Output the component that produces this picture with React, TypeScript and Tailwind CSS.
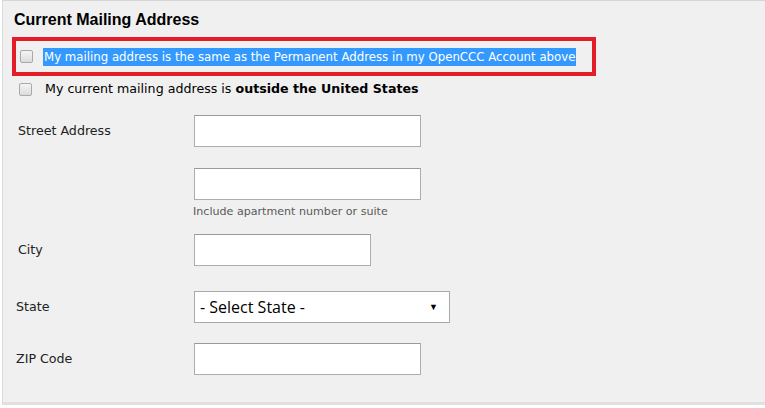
import React from 'react'

const LABEL = 'font-["DejaVu_Sans",Verdana,sans-serif] text-[12.65px] text-[#222]'

function Checkbox() {
  return (
    <span className="block w-[13px] h-[13px] shrink-0 rounded-[2px] border border-[#a9a9a9] bg-gradient-to-b from-[#f4f4f4] to-[#dcdcdc]" />
  )
}

function TextInput({ width }: { width: string }) {
  return <div className={`${width} h-[32px] bg-white border border-[#abadb3] border-t-[#9a9a9a]`} />
}

export default function App() {
  return (
    <div className="w-[765px] h-[408px] bg-white">
      <div className="ml-[2px] w-[763px] h-[405px] bg-[#f0f0f0] border-l border-t border-b-[3px] border-l-[#dcdcdc] border-t-[#d6d6d6] border-b-[#e0e0e0]">
        <h2 className='pl-[11px] pt-[9px] font-["Liberation_Sans",Arial,sans-serif] font-bold text-[16px] leading-[20px] text-black'>
          Current Mailing Address
        </h2>

        {/* highlighted row */}
        <div className="mt-[7px] ml-[9px] w-[584px] h-[39px] border-[4px] border-[#e41e26] flex items-center">
          <div className="ml-[4px]">
            <Checkbox />
          </div>
          <span
            className='ml-[10px] font-["DejaVu_Sans",Tahoma,sans-serif] text-[11.75px] whitespace-nowrap text-white bg-[#3399ff] px-[1px] leading-[18px]'
          >
            My mailing address is the same as the Permanent Address in my OpenCCC Account above
          </span>
        </div>

        <div className="mt-[4px] ml-[16px] flex items-center h-[18px]">
          <Checkbox />
          <span className={`ml-[13px] ${LABEL} whitespace-nowrap text-black`}>
            My current mailing address is <b>outside the United States</b>
          </span>
        </div>

        <div className="mt-[17px] grid grid-cols-[191px_1fr]">
          <div className={`${LABEL} pl-[15px] h-[32px] flex items-center`}>Street Address</div>
          <TextInput width="w-[227px]" />

          <div />
          <div className="mt-[21px] flex flex-col">
            <TextInput width="w-[227px]" />
            <span className='mt-[5px] -ml-[1px] font-["DejaVu_Sans",Verdana,sans-serif] text-[11.1px] leading-[14px] text-[#5a5a5a]'>
              Include apartment number or suite
            </span>
          </div>

          <div className={`${LABEL} pl-[15px] h-[32px] mt-[15px] flex items-center`}>City</div>
          <div className="mt-[15px]">
            <TextInput width="w-[177px]" />
          </div>

          <div className={`${LABEL} pl-[13px] h-[32px] mt-[25px] flex items-center`}>State</div>
          <div className="mt-[25px]">
            <div className="w-[256px] h-[32px] bg-white border border-[#a9a9a9] flex items-center justify-between pl-[5px] pr-[11px]">
              <span className='font-["Open_Sans","DejaVu_Sans",sans-serif] text-[16px] text-black'>- Select State -</span>
              <span className="text-[9px] text-black">▼</span>
            </div>
          </div>

          <div className={`${LABEL} pl-[13px] h-[32px] mt-[20px] flex items-center`}>ZIP Code</div>
          <div className="mt-[20px]">
            <TextInput width="w-[227px]" />
          </div>
        </div>
      </div>
    </div>
  )
}
